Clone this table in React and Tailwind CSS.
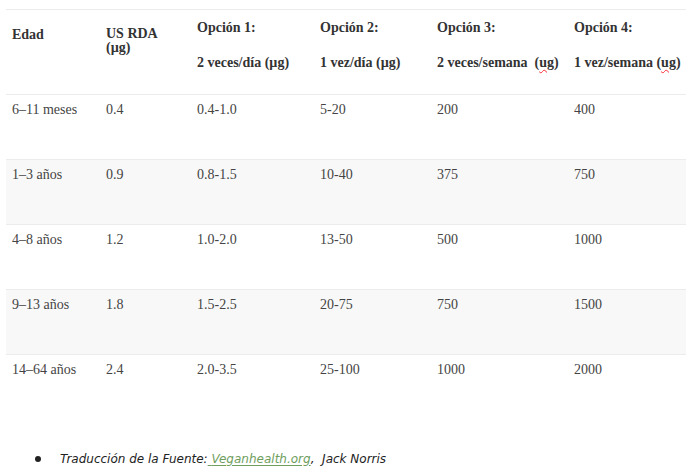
import React from 'react';

const rows = [
  ['6–11 meses', '0.4', '0.4-1.0', '5-20', '200', '400'],
  ['1–3 años', '0.9', '0.8-1.5', '10-40', '375', '750'],
  ['4–8 años', '1.2', '1.0-2.0', '13-50', '500', '1000'],
  ['9–13 años', '1.8', '1.5-2.5', '20-75', '750', '1500'],
  ['14–64 años', '2.4', '2.0-3.5', '25-100', '1000', '2000'],
];

const widths = ['w-[94px]', 'w-[91px]', 'w-[123px]', 'w-[117px]', 'w-[137px]', 'w-[118px]'];

function Ug() {
  return (
    <>
      (<span className="underline decoration-wavy decoration-red-500 decoration-1 underline-offset-2">ug</span>)
    </>
  );
}

function OptionHead({ title, children }) {
  return (
    <th className="align-top text-left font-bold pt-[10px] px-[6px]">
      <div>{title}</div>
      <div className="mt-[20px] whitespace-nowrap">{children}</div>
    </th>
  );
}

export default function App() {
  return (
    <div className="bg-white h-[472px] w-[697px] overflow-hidden pt-[9px] px-[6px]">
      <table
        className="border-collapse table-fixed w-[680px] text-[14px] leading-[15px] text-[#444]"
        style={{ fontFamily: '"Liberation Serif", "Times New Roman", serif' }}
      >
        <colgroup>
          {widths.map((w) => (
            <col key={w} className={w} />
          ))}
        </colgroup>
        <thead>
          <tr className="h-[85px] border-t border-[#ececec] text-[#333]">
            <th className="align-top text-left font-bold pt-[17px] px-[6px]">Edad</th>
            <th className="align-top text-left font-bold pt-[17px] px-[6px] leading-[14px]">
              US RDA
              <br />
              (µg)
            </th>
            <OptionHead title="Opción 1:">2 veces/día (µg)</OptionHead>
            <OptionHead title="Opción 2:">1 vez/día (µg)</OptionHead>
            <OptionHead title="Opción 3:">
              2 veces/semana&nbsp; <Ug />
            </OptionHead>
            <OptionHead title="Opción 4:">
              1 vez/semana <Ug />
            </OptionHead>
          </tr>
        </thead>
        <tbody>
          {rows.map((r, i) => (
            <tr
              key={r[0]}
              className={`h-[65px] border-t border-[#ececec] ${i % 2 === 1 ? 'bg-[#f8f8f8]' : 'bg-white'}`}
            >
              {r.map((c, j) => (
                <td key={j} className="align-top pt-[7px] px-[6px] whitespace-nowrap">
                  {c}
                </td>
              ))}
            </tr>
          ))}
        </tbody>
      </table>

      {/* Source note */}
      <div
        className="mt-[30px] flex items-center text-[12px] italic text-[#222]"
        style={{ fontFamily: '"DejaVu Sans", Verdana, sans-serif' }}
      >
        <span className="ml-[29px] w-[6px] h-[6px] rounded-full bg-[#222] inline-block" />
        <span className="ml-[19px]">
          Traducción de la Fuente:
          <a className="text-[#6f9e5e] underline underline-offset-2 decoration-[#6f9e5e]" href="#">
            {' '}Veganhealth.org
          </a>
          , &nbsp;Jack Norris
        </span>
      </div>
    </div>
  );
}
